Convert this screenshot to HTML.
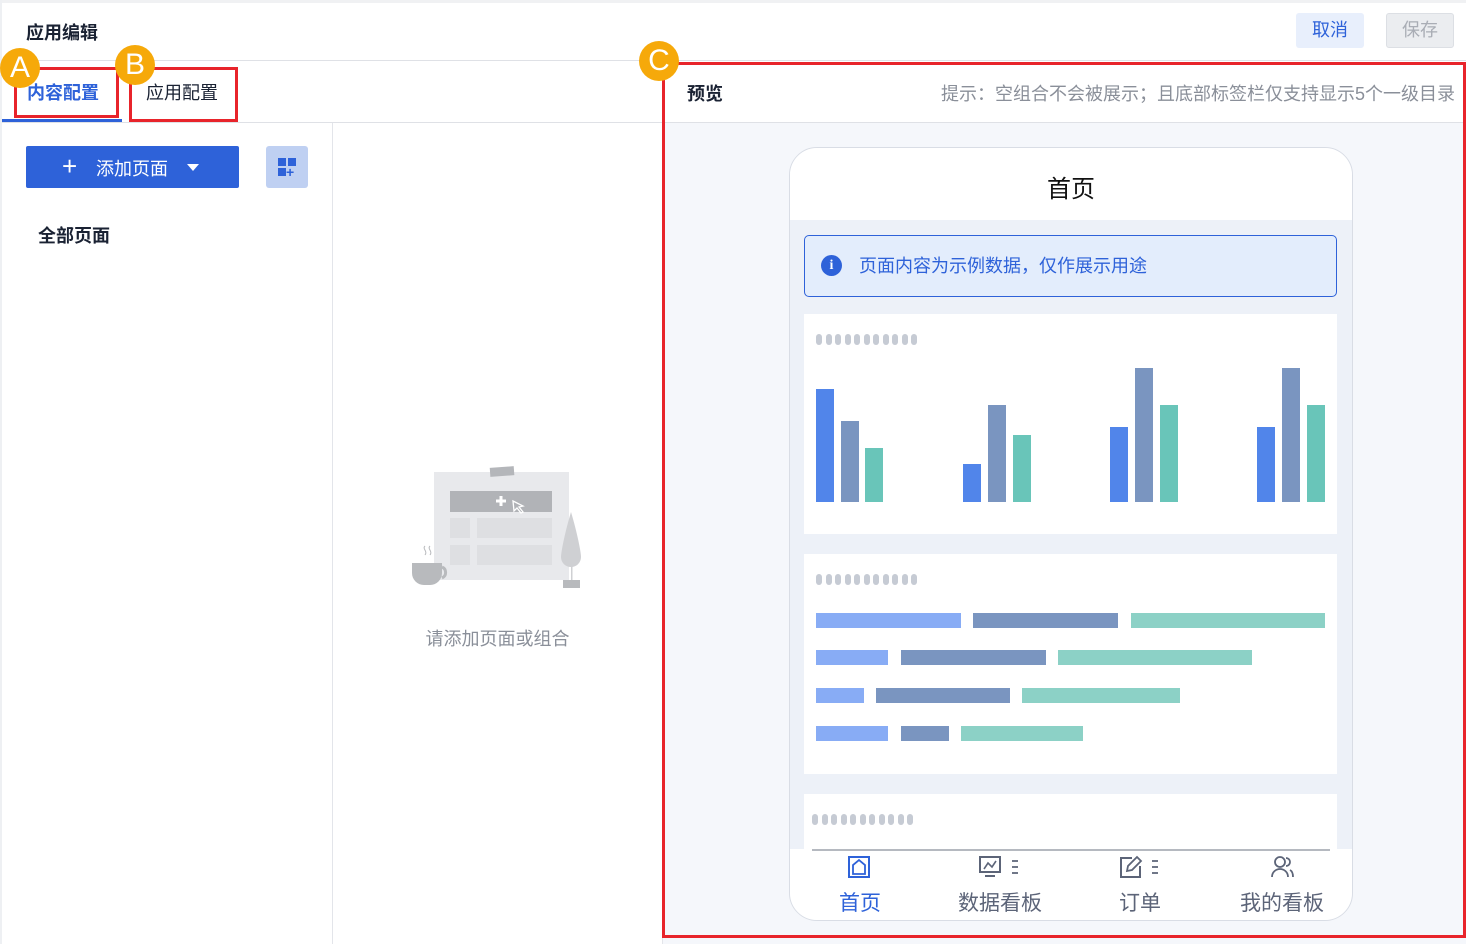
<!DOCTYPE html>
<html><head><meta charset="utf-8"><style>
*{margin:0;padding:0;box-sizing:border-box}
body{width:1466px;height:944px;position:relative;overflow:hidden;background:#fff;font-family:"Liberation Sans","Noto Sans CJK SC",sans-serif;color:#1f2329}
.a{position:absolute}
.t{white-space:nowrap}
.circ{position:absolute;width:40px;height:40px;border-radius:50%;background:#f6a90a;color:#fff;font-size:30px;line-height:40px;text-align:center;font-family:"Liberation Sans",sans-serif}
.red{position:absolute;border:3px solid #e8242b}
.bar{position:absolute;bottom:0}
.hb{position:absolute;height:15px}
.dots{position:absolute;display:flex;gap:3.5px}
.dots i{display:block;width:6px;height:11px;border-radius:3px;background:#c6cbd4}
</style></head><body>
<div class="a" style="left:0;top:0;width:1466px;height:3px;background:#f0f1f3"></div>
<div class="a t" style="left:26px;top:19px;font-size:18px;font-weight:bold;color:#1a2233">应用编辑</div>
<div class="a t" style="left:1296px;top:13px;width:68px;height:35px;background:#e8effc;border-radius:3px;color:#2e62d9;font-size:18px;line-height:35px;text-align:center">取消</div>
<div class="a t" style="left:1386px;top:13px;width:68px;height:35px;background:#ebedf0;border:1px solid #dcdfe4;border-radius:3px;color:#a9adb5;font-size:18px;line-height:33px;text-align:center">保存</div>
<div class="a" style="left:0;top:60px;width:1466px;height:1px;background:#dfe1e6"></div>
<div class="a" style="left:0;top:122px;width:663px;height:1px;background:#dfe1e6"></div>
<div class="a" style="left:332px;top:123px;width:1px;height:821px;background:#e3e5ea"></div>
<div class="a" style="left:662px;top:61px;width:1px;height:883px;background:#e3e5ea"></div>
<div class="a" style="left:0;top:0;width:2px;height:944px;background:#eef0f3"></div>
<!-- tabs -->
<div class="a t" style="left:27px;top:79px;font-size:18px;font-weight:bold;color:#2e62d9">内容配置</div>
<div class="a" style="left:2px;top:119px;width:120px;height:3px;background:#2e62d9"></div>
<div class="a t" style="left:146px;top:79px;font-size:18px;color:#1a2233">应用配置</div>
<div class="red" style="left:14px;top:67px;width:105px;height:51px"></div>
<div class="red" style="left:129px;top:67px;width:109px;height:55px"></div>
<div class="circ" style="left:0;top:48px">A</div>
<div class="circ" style="left:115px;top:45px">B</div>
<!-- add button -->
<div class="a" style="left:26px;top:146px;width:213px;height:42px;background:#2e62d9;border-radius:2px"></div>
<div class="a t" style="left:62px;top:152px;color:#fff;font-size:26px;line-height:28px;font-weight:300">+</div>
<div class="a t" style="left:96px;top:155px;color:#fff;font-size:18px">添加页面</div>
<div class="a" style="left:187px;top:164px;width:0;height:0;border-left:6px solid transparent;border-right:6px solid transparent;border-top:7px solid #fff"></div>
<div class="a" style="left:266px;top:146px;width:42px;height:42px;background:#bfd0f2;border-radius:3px"></div>
<div class="a" style="left:278px;top:158px;width:8px;height:8px;background:#2e62d9"></div>
<div class="a" style="left:288px;top:158px;width:8px;height:8px;background:#2e62d9"></div>
<div class="a" style="left:278px;top:168px;width:8px;height:8px;background:#2e62d9"></div>
<div class="a t" style="left:286px;top:164px;color:#2e62d9;font-size:14px;font-weight:bold">+</div>
<div class="a t" style="left:38px;top:222px;font-size:18px;font-weight:bold;color:#1a2233">全部页面</div>
<!-- empty illustration -->
<svg class="a" style="left:405px;top:460px" width="185" height="135" viewBox="0 0 185 135">
<rect x="29" y="12" width="135" height="108" fill="#e8e9ec"/>
<rect x="85" y="7" width="24" height="9" fill="#b4b6ba" transform="rotate(-4 97 11)"/>
<rect x="45" y="31" width="102" height="21" fill="#b1b3b7"/>
<path d="M96 36v10M91 41h10" stroke="#fff" stroke-width="3"/>
<path d="M108 41l10 5-4 1 4 5-2 1-4-5-3 3z" fill="#b1b3b7" stroke="#fff" stroke-width="1.3"/>
<rect x="45" y="58" width="20" height="20" fill="#dedfe2"/><rect x="72" y="58" width="75" height="20" fill="#dedfe2"/>
<rect x="45" y="85" width="20" height="20" fill="#dedfe2"/><rect x="72" y="85" width="75" height="20" fill="#dedfe2"/>
<path d="M166 52c-6 20-10 40-10 45a10 10 0 0 0 20 0c0-5-4-25-10-45z" fill="#cfd0d3"/>
<rect x="166" y="96" width="1.5" height="25" fill="#cfd0d3"/><rect x="158" y="120" width="17" height="8" fill="#b8babd"/>
<path d="M7 103h30v10a12 12 0 0 1-12 12h-6a12 12 0 0 1-12-12z" fill="#b8babd"/>
<path d="M37 107a6 6 0 0 1 0 11" stroke="#b8babd" stroke-width="3" fill="none"/>
<path d="M20 86c-3 3 3 5 0 9M25 86c-3 3 3 5 0 9" stroke="#b8babd" fill="none"/>
</svg>
<div class="a t" style="left:333px;top:625px;width:329px;text-align:center;font-size:18px;color:#8a8f99">请添加页面或组合</div>
<!-- right panel -->
<div class="a" style="left:663px;top:122px;width:803px;height:822px;background:#f5f7fb"></div>
<div class="a" style="left:663px;top:122px;width:803px;height:1px;background:#dfe1e6"></div>
<div class="a t" style="left:687px;top:80px;font-size:18px;font-weight:bold;color:#1a2233">预览</div>
<div class="a t" style="right:11px;top:80px;font-size:18px;color:#8a8f99">提示：空组合不会被展示；且底部标签栏仅支持显示5个一级目录</div>
<!-- phone -->
<div class="a" style="left:789px;top:147px;width:564px;height:774px;border:1px solid #d9dde5;border-radius:28px;background:#edf1f8;overflow:hidden">
 <div class="a" style="left:0;top:0;width:562px;height:72px;background:#fff"></div>
 <div class="a t" style="left:0;top:21px;width:562px;text-align:center;font-size:24px;color:#111">首页</div>
 <div class="a" style="left:14px;top:87px;width:533px;height:62px;background:#e3edfc;border:1px solid #2e62d9;border-radius:5px"></div>
 <div class="a" style="left:31px;top:107px;width:21px;height:21px;border-radius:50%;background:#2e62d9;color:#fff;font-size:14px;font-weight:bold;text-align:center;line-height:21px;font-family:'Liberation Serif',serif">i</div>
 <div class="a t" style="left:69px;top:104px;font-size:18px;color:#2e62d9">页面内容为示例数据，仅作展示用途</div>
 <div class="a" style="left:14px;top:166px;width:533px;height:220px;background:#fff">
  <div class="dots" style="left:12px;top:20px"><i></i><i></i><i></i><i></i><i></i><i></i><i></i><i></i><i></i><i></i><i></i></div>
  <div class="a" style="left:0;top:0;width:533px;height:188px">
   <div class="bar" style="left:12px;width:18px;height:113px;background:#5185ea"></div>
   <div class="bar" style="left:37px;width:18px;height:81px;background:#7a95c0"></div>
   <div class="bar" style="left:61px;width:18px;height:54px;background:#69c5b9"></div>
   <div class="bar" style="left:159px;width:18px;height:38px;background:#5185ea"></div>
   <div class="bar" style="left:184px;width:18px;height:97px;background:#7a95c0"></div>
   <div class="bar" style="left:209px;width:18px;height:67px;background:#69c5b9"></div>
   <div class="bar" style="left:306px;width:18px;height:75px;background:#5185ea"></div>
   <div class="bar" style="left:331px;width:18px;height:134px;background:#7a95c0"></div>
   <div class="bar" style="left:356px;width:18px;height:97px;background:#69c5b9"></div>
   <div class="bar" style="left:453px;width:18px;height:75px;background:#5185ea"></div>
   <div class="bar" style="left:478px;width:18px;height:134px;background:#7a95c0"></div>
   <div class="bar" style="left:503px;width:18px;height:97px;background:#69c5b9"></div>
  </div>
 </div>
 <div class="a" style="left:14px;top:406px;width:533px;height:220px;background:#fff">
  <div class="dots" style="left:12px;top:20px"><i></i><i></i><i></i><i></i><i></i><i></i><i></i><i></i><i></i><i></i><i></i></div>
  <div class="hb" style="left:12px;top:59px;width:145px;background:#88acf5"></div>
  <div class="hb" style="left:169px;top:59px;width:145px;background:#7a95c0"></div>
  <div class="hb" style="left:327px;top:59px;width:194px;background:#8cd1c6"></div>
  <div class="hb" style="left:12px;top:96px;width:72px;background:#88acf5"></div>
  <div class="hb" style="left:97px;top:96px;width:145px;background:#7a95c0"></div>
  <div class="hb" style="left:254px;top:96px;width:194px;background:#8cd1c6"></div>
  <div class="hb" style="left:12px;top:134px;width:48px;background:#88acf5"></div>
  <div class="hb" style="left:72px;top:134px;width:134px;background:#7a95c0"></div>
  <div class="hb" style="left:218px;top:134px;width:158px;background:#8cd1c6"></div>
  <div class="hb" style="left:12px;top:172px;width:72px;background:#88acf5"></div>
  <div class="hb" style="left:97px;top:172px;width:48px;background:#7a95c0"></div>
  <div class="hb" style="left:157px;top:172px;width:122px;background:#8cd1c6"></div>
 </div>
 <div class="a" style="left:14px;top:646px;width:533px;height:60px;background:#fff">
  <div class="dots" style="left:8px;top:20px"><i></i><i></i><i></i><i></i><i></i><i></i><i></i><i></i><i></i><i></i><i></i></div>
 </div>
 <div class="a" style="left:0;top:701px;width:562px;height:72px;background:#fff"></div>
 <div class="a" style="left:22px;top:701px;width:518px;height:2px;background:#b5b9c0"></div>
 <svg class="a" style="left:57px;top:707px" width="24" height="24" viewBox="0 0 24 24"><rect x="2" y="2" width="20" height="20" fill="none" stroke="#2e62d9" stroke-width="2"/><path d="M6 19V10l6-5 6 5v9z" fill="none" stroke="#2e62d9" stroke-width="1.8"/></svg>
 <div class="a t" style="left:29px;top:739px;width:82px;text-align:center;font-size:21px;color:#2e62d9">首页</div>
 <svg class="a" style="left:188px;top:707px" width="48" height="24" viewBox="0 0 48 24"><rect x="2" y="2" width="20" height="15" fill="none" stroke="#5c6478" stroke-width="2"/><path d="M6 14l4-6 4 4 4-6" fill="none" stroke="#5c6478" stroke-width="1.6"/><path d="M7 21h10" stroke="#5c6478" stroke-width="2"/><path d="M34 6h6M34 12h6M34 18h6" stroke="#5c6478" stroke-width="1.8"/></svg>
 <div class="a t" style="left:155px;top:739px;width:110px;text-align:center;font-size:21px;color:#5c6478">数据看板</div>
 <svg class="a" style="left:328px;top:707px" width="48" height="24" viewBox="0 0 48 24"><path d="M14 3H3v19h19V11" fill="none" stroke="#5c6478" stroke-width="2"/><path d="M9 16l1-5 9-9 4 4-9 9z" fill="none" stroke="#5c6478" stroke-width="1.8"/><path d="M34 6h6M34 12h6M34 18h6" stroke="#5c6478" stroke-width="1.8"/></svg>
 <div class="a t" style="left:300px;top:739px;width:100px;text-align:center;font-size:21px;color:#5c6478">订单</div>
 <svg class="a" style="left:480px;top:707px" width="26" height="24" viewBox="0 0 26 24"><circle cx="10" cy="7" r="5" fill="none" stroke="#5c6478" stroke-width="1.8"/><path d="M2 22c0-5 4-8 8-8s8 3 8 8" fill="none" stroke="#5c6478" stroke-width="1.8"/><path d="M16 3a4 4 0 0 1 0 8M20 15c2 1 3 4 3 7" fill="none" stroke="#5c6478" stroke-width="1.8"/></svg>
 <div class="a t" style="left:437px;top:739px;width:110px;text-align:center;font-size:21px;color:#5c6478">我的看板</div>
</div>
<div class="red" style="left:662px;top:62px;width:804px;height:876px"></div>
<div class="circ" style="left:639px;top:41px">C</div>
</body></html>
